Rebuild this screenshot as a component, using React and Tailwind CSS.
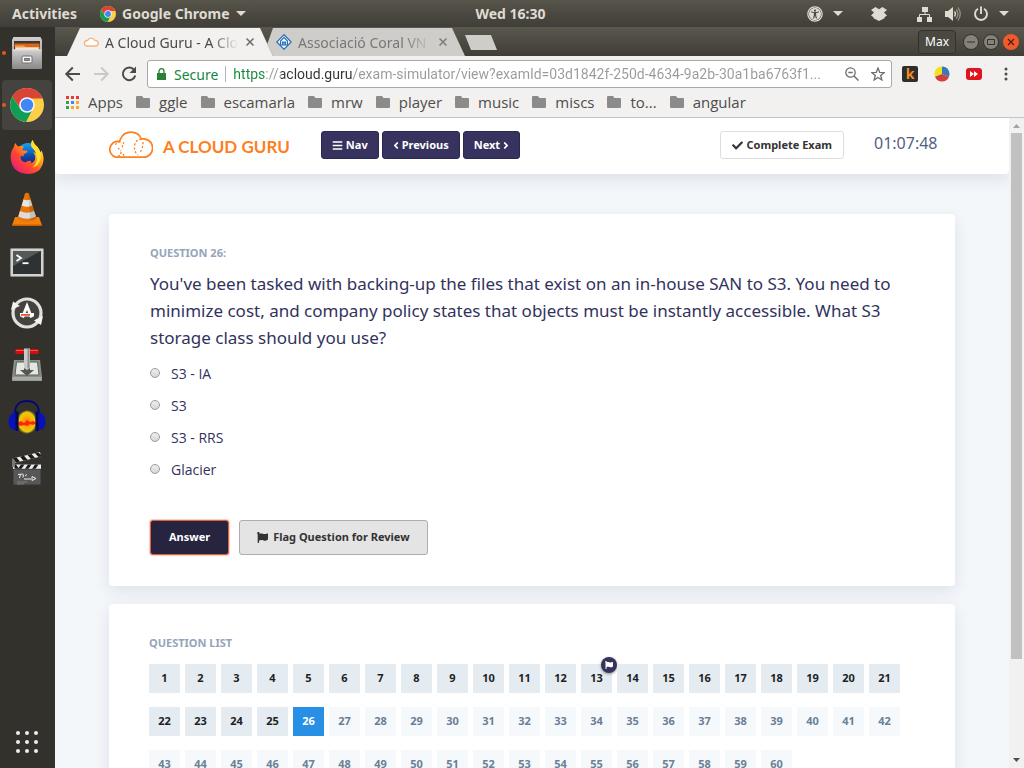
import React from "react";
import {
  FaAngleLeft,
  FaAngleRight,
  FaBars,
  FaCheck,
  FaFlag,
  FaUniversalAccess,
} from "react-icons/fa";

const ChromeIcon = ({ className }) => (
  <svg viewBox="0 0 34 34" className={className} aria-hidden="true">
    <circle cx="17" cy="17" r="17" fill="#fbcf47" />
    <path d="M2.3 8.5A17 17 0 0 1 31.7 8.5L32.6 10.4H17L10.4 20.8Z" fill="#da4437" />
    <path d="M2.3 8.5A17 17 0 0 0 16 33.97L23 20.6H17L10 20.5Z" fill="#109d58" />
    <circle cx="17" cy="17" r="7.8" fill="#f3f6fb" />
    <circle cx="17" cy="17" r="6.2" fill="#4285f4" />
  </svg>
);

const FilesIcon = () => (
  <svg viewBox="0 0 34 34" className="size-[34px]" aria-hidden="true">
    <defs>
      <linearGradient id="cabinet" x1="0" y1="0" x2="0" y2="1">
        <stop offset="0" stopColor="#d0d0d0" />
        <stop offset="1" stopColor="#8b8b8b" />
      </linearGradient>
    </defs>
    <path d="M3.500 1h27l1.500 3v28q0 1-1 1H3q-1 0-1-1V4z" fill="url(#cabinet)" />
    <path d="M4 5h26v12H4z" fill="#45352b" />
    <path d="M4.500 7.500h25V11h-25z" fill="#d9661f" />
    <path d="M5 9.500h9l1.500 1.500h14V14H5z" fill="#f2a24a" />
    <path d="M5.500 11.500h23V14h-23z" fill="#f6e6cf" />
    <path d="M2.500 13.500h29V32h-29z" fill="url(#cabinet)" />
    <path d="M2.500 13.500h29v1h-29z" fill="#e2e2e2" />
    <rect x="12" y="20" width="10" height="7" rx="1" fill="#f5f5f5" stroke="#6e6e6e" />
    <path d="M14.500 22.500h5v2h-5z" fill="#9a9a9a" stroke="#555" strokeWidth=".8" />
  </svg>
);

const FirefoxIcon = () => (
  <svg viewBox="0 0 34 34" className="size-[34px]" aria-hidden="true">
    <defs>
      <linearGradient id="fox" x1="1" y1="0" x2="0.100" y2="1">
        <stop offset="0" stopColor="#fff44f" />
        <stop offset="0.350" stopColor="#ffb01f" />
        <stop offset="0.620" stopColor="#ff4a2c" />
        <stop offset="1" stopColor="#e3128c" />
      </linearGradient>
      <linearGradient id="globe" x1="0.500" y1="0" x2="0.500" y2="1">
        <stop offset="0" stopColor="#1aa5f0" />
        <stop offset="0.550" stopColor="#0b49a8" />
        <stop offset="1" stopColor="#25146b" />
      </linearGradient>
    </defs>
    <circle cx="18" cy="15" r="12" fill="url(#globe)" />
    <path
      d="M22.500 0q1 3.500 5 7 1 .5 1 2.500 1.500 1 1.700 3l1.500-2q2.300 6 1.800 10Q31.500 34 17.500 34 2.500 33 .7 19 .2 11 4 7q0-2.500 1.500-4 .8 2.500 2.600 3.500 3-1.300 5.900.2-2 1.500-1.600 3.500l4.800.5q1 1.300-2.600 3-1.300.8-1 2.500l-2.800-.2q-.8 3.500 2.200 5.500 2.600 1.500 5-.5 3-.8 3.300 1 .2 1-2.300 1.500 4.500 0 6-4 1-4-2-7.500l3.200 1.200Q25 10 22 7.500 20 4 22.500 0z"
      fill="url(#fox)"
    />
    <path d="M22.500 0q1 3.500 5 7 5 6 3 12.500-2 6.500-8 8 6-5 4-12Q26 11 22 7.500 20 4 22.500 0z" fill="#ffdf2f" />
  </svg>
);

const VlcIcon = () => (
  <svg viewBox="0 0 34 36" className="h-9 w-[34px]" aria-hidden="true">
    <path d="M5 26h24l3 8.500H2z" fill="#f57f0b" />
    <path d="M2.500 33.500h29V35h-29z" fill="#c95f00" />
    <path d="M15 2.500q2-1.500 4 0l7.500 25.500q-9.500 5.500-19 0z" fill="#e97408" />
    <path d="M13.500 8.500q3.500 1.500 7 0l1.800 6q-5.300 2.500-10.600 0z" fill="#e6e6e6" />
    <path d="M10 20q7 3.500 14 0l2 5.500q-9 4.500-17.700 0z" fill="#dcdcdc" />
    <path d="M18 2q1 0 1.500 1l7 24.500q-3 2-6 2z" fill="#000" opacity=".12" />
  </svg>
);

const TerminalIcon = () => (
  <svg viewBox="0 0 34 30" className="mt-1 h-[30px] w-[34px]" aria-hidden="true">
    <rect x=".5" y=".5" width="33" height="28" rx="1" fill="#d2d2d2" stroke="#8c8c8c" />
    <path d="M3 3h28v23H3z" fill="#2f3232" />
    <path d="M3 3h28L3 18z" fill="#555957" />
    <path d="M6.500 7l4.500 3-4.500 3" fill="none" stroke="#fff" strokeWidth="1.800" />
    <path d="M12.500 15.200h6" stroke="#fff" strokeWidth="1.800" />
  </svg>
);

const UpdaterIcon = () => (
  <svg viewBox="0 0 34 34" className="size-[34px]" aria-hidden="true">
    <circle cx="17" cy="17" r="14" fill="#454340" />
    <circle cx="17" cy="17" r="14" fill="none" stroke="#e2e0dd" strokeWidth="3.200" />
    <path d="M1 14l2-8.500 7 4.500-2.500 1z" fill="#f4f3f1" />
    <path d="M33 20l-2 9-7-4.500 2.500-1.500z" fill="#f4f3f1" />
    <path d="M12.500 21.500L17 10l4.500 11.500" fill="none" stroke="#fff" strokeWidth="3" />
    <path d="M10 17h14v3.500H10z" fill="#fff" />
    <path d="M11 18h9v1.800h-9z" fill="#e95420" />
  </svg>
);

const TransmissionIcon = () => (
  <svg viewBox="0 0 34 36" className="h-9 w-[34px]" aria-hidden="true">
    <path d="M4 13h26l2 17v4H2v-4z" fill="#8b8d89" />
    <path d="M2.500 30h29v3.500h-29z" fill="#a9aba7" />
    <path d="M6.500 15h21l1.500 13H5z" fill="#e4e6e2" stroke="#5d5f5c" />
    <path d="M14 20h6v3h4l-7 6-7-6h4z" fill="#555753" />
    <rect x="5" y="2" width="24" height="5" rx="2.500" fill="#d40c0c" />
    <path d="M6 3.500h22" stroke="#f35050" />
    <path d="M14 1.500h6V21l-3 2-3-2z" fill="#c9cbc8" />
    <path d="M17.500 2h2v18.500l-2 1z" fill="#8e908c" />
  </svg>
);

const AudacityIcon = () => (
  <svg viewBox="0 0 38 36" className="h-9 w-[38px]" aria-hidden="true">
    <defs>
      <radialGradient id="flame">
        <stop offset="0" stopColor="#ff7a00" />
        <stop offset="0.500" stopColor="#f9b208" />
        <stop offset="0.800" stopColor="#e9cb10" />
        <stop offset="1" stopColor="#a08a10" stopOpacity=".3" />
      </radialGradient>
    </defs>
    <path d="M9 17l5-4 5-2 6 2 4 4v13l-5 3-5 2-6-2-4-3z" fill="url(#flame)" />
    <path d="M9 24l4-2 3 2 3-3 3 2 3-1 4 2-4 2-3-1-3 2-3-1-4 1z" fill="#ff2600" />
    <path d="M7 14C7 6 12 2 19 2s12 4 12 12" fill="none" stroke="#040a70" strokeWidth="2" />
    <path d="M8 12.500q-8 3-7.500 11T8 31h2V12.500z" fill="#0712b9" />
    <path d="M30 12.500q8 3 7.500 11T30 31h-2V12.500z" fill="#0712b9" />
    <path d="M7.500 12.500h3V32h-3zM27.500 12.500h3V32h-3z" fill="#060a4c" />
  </svg>
);

const ClapperIcon = () => (
  <svg viewBox="0 0 32 36" className="h-9 w-8" aria-hidden="true">
    <path d="M2 18h28v16H2z" fill="#575757" stroke="#343434" />
    <path d="M2 13.500h28v4.300H2z" fill="#ededed" />
    <path d="M2 13.500h3l3 4.300H4zM10 13.500h3.500l-3 4.300H7zM17 13.500h3.500l-3 4.300H14zM24 13.500h3.500l-3 4.300H21z" fill="#1b1b1b" />
    <path d="M1.500 7.500L29 1l1 4.500L2.800 12z" fill="#ededed" />
    <path d="M1.500 7.500l4-.9 3.500 3.900-4 1zM9 5.700l4-.9 3.500 4-4 .9zM16.500 4l4-1 3.500 4-4 1zM24 2.200l3.500-.8L30 4l.3 1.500-2.800.6z" fill="#1b1b1b" />
    <path d="M1 8l3 1v7H1z" fill="#777" />
    <path d="M7 23.500l5-.5M9.500 23.500l-1 3.500M12.500 23.500l-.5 3M14 25l2-1.500M13 28h7M21 25.500v4l4-2z" stroke="#eee" strokeWidth="1" fill="none" />
    <path d="M6 31h10M6 33h7" stroke="#888" strokeWidth=".8" />
  </svg>
);

const dock = [
  { name: "Files", icon: <FilesIcon />, running: true },
  { name: "Google Chrome", icon: <ChromeIcon className="size-[34px]" />, running: true, active: true },
  { name: "Firefox", icon: <FirefoxIcon /> },
  { name: "VLC media player", icon: <VlcIcon /> },
  { name: "Terminal", icon: <TerminalIcon /> },
  { name: "Software Updater", icon: <UpdaterIcon /> },
  { name: "Transmission", icon: <TransmissionIcon /> },
  { name: "Audacity", icon: <AudacityIcon /> },
  { name: "Video editor", icon: <ClapperIcon /> },
];

const Caret = () => (
  <svg viewBox="0 0 10 5" className="h-[5px] w-[10px]" aria-hidden="true">
    <path d="M0 0h10L5 5z" fill="currentColor" />
  </svg>
);

const TopBar = () => (
  <header className="flex h-[27px] shrink-0 items-center bg-linear-to-b from-[#57544a] to-[#403e38] text-[14px] font-bold text-[#dfdbd2]">
    <div className="flex flex-1 items-center gap-[23px] pl-3">
      <button type="button">Activities</button>
      <button type="button" className="flex items-center gap-[6px]">
        <ChromeIcon className="size-4" />
        <span>Google Chrome</span>
        <Caret />
      </button>
    </div>
    <time>Wed 16:30</time>
    <div className="flex flex-1 items-center justify-end pr-[15px]">
      <button type="button" aria-label="Accessibility" className="flex items-center gap-[10px]">
        <FaUniversalAccess className="size-4" />
        <Caret />
      </button>
      <svg viewBox="0 0 16 14" className="ml-7 h-[14px] w-4" aria-hidden="true">
        <path d="M4.500 0L8 2.300 11.500 0 16 3l-3 2.500L16 8.500l-2.500 1.800v1L8 14l-5.500-2.700v-1L0 8.500l3-3L0 3z" fill="currentColor" />
      </svg>
      <button type="button" aria-label="System menu" className="ml-[30px] flex items-center gap-3">
        <svg viewBox="0 0 16 16" className="size-4" aria-hidden="true">
          <path d="M5 1h6v5H5zM0 11h5v5H0zM10 11h5v5h-5z" fill="currentColor" />
          <path d="M8 6v2.500M2.500 11V8.500h10V11" fill="none" stroke="currentColor" />
        </svg>
        <svg viewBox="0 0 16 16" className="size-4" aria-hidden="true">
          <path d="M0 5h3l5-4v14l-5-4H0z" fill="currentColor" />
          <path d="M9.500 5.500q2 2.500 0 5" fill="none" stroke="currentColor" strokeWidth="1.300" />
          <path d="M11.300 3.500q3.500 4.500 0 9M13 1.500q4.500 6.500 0 13" fill="none" stroke="currentColor" strokeWidth="1.300" opacity=".5" />
        </svg>
        <span className="flex items-center gap-[10px]">
          <svg viewBox="0 0 16 16" className="size-4" aria-hidden="true">
            <path d="M5 2.800A6 6 0 1 0 11 2.800M8 .5V8" fill="none" stroke="currentColor" strokeWidth="1.900" />
          </svg>
          <Caret />
        </span>
      </button>
    </div>
  </header>
);

const Dock = () => (
  <nav aria-label="Dock" className="flex w-[55px] shrink-0 flex-col items-start bg-[#33312c] pt-px pb-[15px] pl-[2px]">
    <ul className="flex flex-col gap-[2px]">
      {dock.map((app) => (
        <li key={app.name} className="relative">
          {app.running && <span className="absolute top-[23px] left-0 size-1 rounded-full bg-[#e95420]" />}
          <button
            type="button"
            aria-label={app.name}
            className={
              app.active
                ? "flex size-[50px] items-center justify-center rounded-[4px] bg-[#45433f]"
                : "flex size-[50px] items-center justify-center"
            }
          >
            {app.icon}
          </button>
        </li>
      ))}
    </ul>
    <button type="button" aria-label="Show applications" className="mt-auto ml-[14px] grid grid-cols-3 gap-[5px]">
      {Array.from({ length: 9 }, (_, i) => (
        <span key={i} className="size-1 rounded-full bg-[#eeeeec]" />
      ))}
    </button>
  </nav>
);

const CloseMark = () => (
  <svg viewBox="0 0 8 8" className="size-2" aria-hidden="true">
    <path d="M.5.5l7 7M7.500.5l-7 7" stroke="currentColor" strokeWidth="1.500" />
  </svg>
);

const CloudOutline = ({ className }) => (
  <svg viewBox="2 0 44 28" className={className} aria-hidden="true">
    <g fill="none" stroke="#ff7f1f" strokeWidth="1.700">
      <path d="M9 26.200h27.500A9.200 9.200 0 1 0 34.500 8 11.500 11.500 0 0 0 13.500 8Q12.800 9.200 12.700 10.600A8 8 0 0 0 9 26.200z" />
      <path d="M12.700 10.600Q9.500 11 8.500 14M17 11q-2 3-1.500 7M11 17l3 3M14 21q0 3-4 5M16 23l2 3" strokeDasharray="2 1.500" strokeWidth="1.300" />
      <path d="M34.500 8Q28 9 27.500 15T31 24M36 11q0 7-3 10" strokeDasharray="2 2" strokeWidth="1.300" />
    </g>
  </svg>
);

const TabCloud = () => (
  <svg viewBox="0 0 16 10" className="h-[10px] w-4 shrink-0" aria-hidden="true">
    <path d="M3.500 9h9a2.800 2.800 0 1 0-.7-5.500 4 4 0 0 0-7.300 0A2.800 2.800 0 0 0 3.500 9z" fill="#fff" stroke="#ffb27a" strokeWidth="1.400" />
  </svg>
);

const TabStrip = () => (
  <div className="flex h-[29px] shrink-0 items-end bg-linear-to-b from-[#5a574d] to-[#403e38] pl-3">
    <div role="tablist" className="flex">
      <div className="flex h-7 w-[206px] items-center bg-[#f2f1ef] pr-[19px] pl-4 [clip-path:polygon(13px_0,193px_0,100%_100%,0_100%)]">
        <button type="button" role="tab" aria-selected="true" className="flex min-w-0 flex-1 items-center gap-[6px] text-[14px] text-[#4a4a4a]">
          <TabCloud />
          <span className="min-w-0 flex-1 overflow-hidden text-left whitespace-nowrap [mask-image:linear-gradient(to_right,#000_80%,transparent)]">
            A Cloud Guru - A Clo
          </span>
        </button>
        <button type="button" aria-label="Close tab" className="ml-2 text-[#6b6b6b]">
          <CloseMark />
        </button>
      </div>
      <div className="-ml-[6px] flex h-7 w-[198px] items-center bg-[#cfcdca] pr-[18px] pl-[9px] [clip-path:polygon(6px_0,185px_0,100%_100%,6px_100%,0_60%)]">
        <button type="button" role="tab" aria-selected="false" className="flex min-w-0 flex-1 items-center gap-[6px] text-[14px] text-[#777]">
          <svg viewBox="0 0 16 16" className="size-4 shrink-0" aria-hidden="true">
            <path d="M8 .8L15.200 8 8 15.200.8 8z" fill="#fff" stroke="#2a70b8" strokeWidth="1.300" />
            <path d="M8 3.500L11.500 7v4H9.500V8h-3v3h-2V7zM8 8v4" fill="none" stroke="#2a70b8" strokeWidth="1.200" />
          </svg>
          <span className="min-w-0 flex-1 overflow-hidden text-left whitespace-nowrap [mask-image:linear-gradient(to_right,#000_80%,transparent)]">
            Associació Coral VN
          </span>
        </button>
        <button type="button" aria-label="Close tab" className="ml-2 text-[#7b7b7b]">
          <CloseMark />
        </button>
      </div>
    </div>
    <button
      type="button"
      aria-label="New tab"
      className="mb-[6px] h-[15px] w-8 bg-[#cfcdca] [clip-path:polygon(0_0,26px_0,100%_100%,6px_100%)]"
    />
    <div className="ml-auto flex h-full items-center gap-1 pr-[5px]">
      <button type="button" className="mr-[3px] h-6 rounded-[4px] border border-[#33312c] bg-[#4a4841] px-[6px] text-[12px] text-white">
        Max
      </button>
      <button type="button" aria-label="Minimize" className="flex size-4 items-center justify-center rounded-full border border-[#35332e] bg-[#84827a]">
        <svg viewBox="0 0 8 8" className="size-2" aria-hidden="true"><path d="M0 4h8" stroke="#35332e" /></svg>
      </button>
      <button type="button" aria-label="Maximize" className="flex size-4 items-center justify-center rounded-full border border-[#35332e] bg-[#84827a]">
        <svg viewBox="0 0 8 8" className="size-2" aria-hidden="true"><path d="M.5 1.500h7v5h-7z" fill="none" stroke="#35332e" /></svg>
      </button>
      <button type="button" aria-label="Close window" className="flex size-4 items-center justify-center rounded-full bg-[#f15a2c] text-[#4b1c0c]">
        <svg viewBox="0 0 8 8" className="size-2" aria-hidden="true"><path d="M1 1l6 6M7 1L1 7" stroke="currentColor" strokeWidth="1.200" /></svg>
      </button>
    </div>
  </div>
);

const AddressRow = () => (
  <div className="flex h-9 items-center pr-[10px] pl-[9px] text-[#4b4b4b]">
    <div className="flex items-center gap-[10px]">
      <button type="button" aria-label="Back">
        <svg viewBox="0 0 18 18" className="size-[18px]" aria-hidden="true"><path d="M16 9H2.500M8.800 2.500L2.300 9l6.500 6.500" fill="none" stroke="currentColor" strokeWidth="2" /></svg>
      </button>
      <button type="button" aria-label="Forward" className="text-[#c9c8c6]">
        <svg viewBox="0 0 18 18" className="size-[18px]" aria-hidden="true"><path d="M2 9h13.500M9.200 2.500L15.700 9l-6.500 6.500" fill="none" stroke="currentColor" strokeWidth="2" /></svg>
      </button>
      <button type="button" aria-label="Reload">
        <svg viewBox="0 0 18 18" className="size-[18px]" aria-hidden="true">
          <path d="M14.200 5A6.300 6.300 0 1 0 15.300 10.500" fill="none" stroke="currentColor" strokeWidth="2" />
          <path d="M16 1.500v6.500H9.500z" fill="currentColor" />
        </svg>
      </button>
    </div>
    <div className="ml-[9px] flex h-7 min-w-0 flex-1 items-center rounded-[3px] border border-[#a9a9a9] bg-white pr-[6px] pl-[9px] text-[14px]">
      <svg viewBox="0 0 9 12" className="h-3 w-[9px] shrink-0" aria-hidden="true">
        <path d="M0 5h9v7H0z" fill="#2b7f36" />
        <path d="M2 5V3.200a2.500 2.500 0 0 1 5 0V5" fill="none" stroke="#2b7f36" strokeWidth="1.300" />
      </svg>
      <span className="ml-2 text-[#16873d]">Secure</span>
      <span className="mx-[7px] h-4 w-px bg-[#b5b5b5]" />
      <input
        aria-label="Address"
        type="text"
        className="min-w-0 flex-1 overflow-hidden bg-linear-[to_right,#16873d_33px,#9a9a9a_33px,#9a9a9a_48px,#333_48px,#333_120px,#9a9a9a_120px] bg-clip-text [font-family:Roboto,sans-serif] text-[14px] text-transparent outline-none"
        defaultValue="https://acloud.guru/exam-simulator/view?examId=03d1842f-250d-4634-9a2b-30a1ba6763f1..."
      />
      <button type="button" aria-label="Zoom" className="ml-2 text-[#6f6f6f]">
        <svg viewBox="0 0 14 14" className="size-[14px]" aria-hidden="true">
          <circle cx="5.500" cy="5.500" r="4.700" fill="none" stroke="currentColor" strokeWidth="1.300" />
          <path d="M9 9l4.500 4.500M3.300 5.500h4.400" stroke="currentColor" strokeWidth="1.500" />
        </svg>
      </button>
      <button type="button" aria-label="Bookmark this page" className="ml-3 text-[#6f6f6f]">
        <svg viewBox="0 0 14 14" className="size-[14px]" aria-hidden="true">
          <path d="M7 1l1.700 4.300 4.500.3-3.500 2.900 1.200 4.500L7 10.500 3.100 13l1.200-4.500L.8 5.600l4.500-.3z" fill="none" stroke="currentColor" strokeWidth="1.300" />
        </svg>
      </button>
    </div>
    <div className="ml-[10px] flex items-center gap-4">
      <button type="button" className="flex size-4 items-center justify-center rounded-[2px] bg-[#2e2e2e] text-[14px] leading-4 font-bold text-[#f98b1e]">
        k
      </button>
      <button type="button" aria-label="Chart extension">
        <svg viewBox="0 0 16 16" className="size-4" aria-hidden="true">
          <path d="M8 8V.5A7.500 7.500 0 0 0 1 10.700z" fill="#f2e11b" />
          <path d="M8 8V.5a7.500 7.500 0 0 1 7 10.200z" fill="#3a79b7" />
          <path d="M8 8l7 2.700a7.500 7.500 0 0 1-14 0z" fill="#cf3f3f" />
        </svg>
      </button>
      <button type="button" aria-label="Video extension">
        <svg viewBox="0 0 16 12" className="h-3 w-4" aria-hidden="true">
          <rect width="16" height="12" rx="3" fill="#e0141e" />
          <path d="M4 3l4 3-4 3zM8 3l4 3-4 3z" fill="#fff" />
        </svg>
      </button>
      <button type="button" aria-label="Browser menu" className="flex w-4 justify-center">
        <svg viewBox="0 0 4 14" className="h-[14px] w-1" aria-hidden="true">
          <g fill="#4b4b4b"><circle cx="2" cy="2" r="1.500" /><circle cx="2" cy="7" r="1.500" /><circle cx="2" cy="12" r="1.500" /></g>
        </svg>
      </button>
    </div>
  </div>
);

const folders = ["ggle", "escamarla", "mrw", "player", "music", "miscs", "to...", "angular"];
const appColors = ["#ea3939", "#ea3939", "#ea3939", "#34a053", "#4285f4", "#f6a92c", "#34a053", "#f6a92c", "#f6a92c"];

const Bookmarks = () => (
  <nav aria-label="Bookmarks" className="flex h-[26px] items-center gap-[13px] border-b border-[#c5c4c2] pb-[5px] pl-[11px] [font-family:'Open_Sans',sans-serif] text-[15px] leading-5 text-[#4d4d4d]">
    <a href="#apps" className="flex items-center gap-[9px]">
      <svg viewBox="0 0 13 13" className="size-[13px]" aria-hidden="true">
        {appColors.map((color, i) => (
          <rect key={i} x={(i % 3) * 5} y={Math.floor(i / 3) * 5} width="3" height="3" fill={color} />
        ))}
      </svg>
      Apps
    </a>
    {folders.map((name) => (
      <a key={name} href="#folder" className="flex items-center gap-[9px]">
        <svg viewBox="0 0 14 12" className="h-3 w-[14px]" aria-hidden="true">
          <path d="M1 0h5l1.500 2H13q1 0 1 1v8q0 1-1 1H1q-1 0-1-1V1q0-1 1-1z" fill="#8b8b8b" />
        </svg>
        {name}
      </a>
    ))}
  </nav>
);

const navButton =
  "flex h-7 items-center gap-[3px] rounded-[3px] border border-[#2a2750] bg-[#36335e] px-[10px] text-[11px] font-bold text-white";

const SiteHeader = () => (
  <header className="relative flex h-14 shrink-0 items-start rounded-b-[4px] bg-white px-[54px] pt-[13px] shadow-[0_5px_15px_rgba(50,50,93,0.11)]">
    <a href="#home" className="flex items-center gap-[10px] text-[17px] font-bold text-[#ff7f1f] [font-family:Lato,sans-serif]">
      <CloudOutline className="h-7 w-11" />
      <span className="pt-1 leading-6 whitespace-nowrap">A CLOUD GURU</span>
    </a>
    <nav aria-label="Exam" className="ml-[31px] flex gap-[3px]">
      <button type="button" className={navButton}>
        <FaBars className="size-[11px]" />
        Nav
      </button>
      <button type="button" className={navButton}>
        <FaAngleLeft className="h-[11px] w-[6px]" />
        Previous
      </button>
      <button type="button" className={navButton}>
        Next
        <FaAngleRight className="h-[11px] w-[6px]" />
      </button>
    </nav>
    <button type="button" className="ml-auto flex h-7 items-center gap-1 rounded-[3px] border border-[#dedede] bg-white px-[11px] text-[11px] font-bold text-[#333]">
      <FaCheck className="size-[11px]" />
      Complete Exam
    </button>
    <time className="ml-[30px] w-[81px] text-[16px] leading-6 text-[#525f7f]">01:07:48</time>
  </header>
);

const answers = ["S3 - IA", "S3", "S3 - RRS", "Glacier"];

const QuestionCard = () => (
  <section className="rounded-[4px] bg-white px-[41px] pt-[31px] pb-[31px] shadow-[0_5px_15px_rgba(50,50,93,0.1)]">
    <h2 className="text-[11px] leading-4 font-bold text-[#94a5ba]">QUESTION 26:</h2>
    <p className="mt-[9px] text-[17px] leading-[27px] text-[#32325d]">
      You've been tasked with backing-up the files that exist on an in-house SAN to S3. You need to minimize cost, and
      company policy states that objects must be instantly accessible. What S3 storage class should you use?
    </p>
    <fieldset aria-label="Answers" className="mt-[6px]">
      {answers.map((answer) => (
        <label key={answer} className="flex h-8 items-center gap-[11px] [font-family:'Open_Sans',sans-serif] text-[14px] text-[#32325d]">
          <input
            type="radio"
            name="answer"
            className="size-[10px] appearance-none rounded-full border border-[#9c9c9c] bg-linear-to-b from-[#eee] to-[#d6d6d6] checked:bg-[#555]"
          />
          {answer}
        </label>
      ))}
    </fieldset>
    <div className="mt-[35px] flex gap-[10px]">
      <button type="button" className="h-[35px] rounded-[3px] border border-[#d9633e] bg-[#26243f] px-[18px] text-[11px] font-bold text-white shadow-[0_0_1px_1px_rgba(233,84,32,0.3)]">
        Answer
      </button>
      <button type="button" className="flex h-[35px] items-center gap-[5px] rounded-[3px] border border-[#adadad] bg-[#e4e4e4] px-[17px] text-[11px] font-bold text-[#333]">
        <FaFlag className="size-[11px]" />
        Flag Question for Review
      </button>
    </div>
  </section>
);

const CURRENT = 26;
const FLAGGED = 13;
const cellStyle = (n) => {
  if (n === CURRENT) return "h-[29px] w-[31px] bg-[#2790e5] text-white";
  if (n < CURRENT) return "h-[29px] w-[31px] bg-[#e4ecf2] text-[#1f1f1f]";
  return "h-[29px] w-[31px] bg-[#f5f9fc] text-[#6b7f96]";
};

const QuestionList = () => (
  <section className="mt-[18px] rounded-[4px] bg-white px-10 pt-[31px] pb-10 shadow-[0_5px_15px_rgba(50,50,93,0.1)]">
    <h2 className="text-[11px] leading-4 font-bold text-[#94a5ba]">QUESTION LIST</h2>
    <ol className="mt-[13px] flex flex-wrap gap-x-[5px] gap-y-[14px] text-[11px] font-bold">
      {Array.from({ length: 60 }, (_, i) => i + 1).map((n) => (
        <li key={n} className="relative">
          <button type="button" aria-current={n === CURRENT ? "step" : undefined} className={cellStyle(n)}>
            {n}
          </button>
          {n === FLAGGED && (
            <span className="absolute -top-[7px] left-5 flex size-4 items-center justify-center rounded-full bg-[#36335e] text-white shadow-[0_1px_3px_rgba(0,0,0,0.4)]">
              <FaFlag className="size-2" />
            </span>
          )}
        </li>
      ))}
    </ol>
  </section>
);

const Scrollbar = () => (
  <div aria-hidden="true" className="flex w-[15px] shrink-0 flex-col items-center bg-[#f1f1f1] text-[#505050]">
    <svg viewBox="0 0 15 15" className="size-[15px] shrink-0"><path d="M4 10h7L7.500 6z" fill="#a3a3a3" /></svg>
    <div className="h-[526px] w-[11px] bg-[#c1c1c1]" />
    <svg viewBox="0 0 15 15" className="mt-auto size-[15px] shrink-0"><path d="M4 5h7L7.500 9z" fill="currentColor" /></svg>
  </div>
);

export default function App() {
  return (
    <div className="flex h-screen flex-col overflow-hidden bg-[#33312c] [font-family:'Noto_Sans',sans-serif]">
      <TopBar />
      <div className="flex min-h-0 flex-1">
        <Dock />
        <div className="flex min-w-0 flex-1 flex-col">
          <TabStrip />
          <div className="shrink-0 bg-[#f2f1ef]">
            <AddressRow />
            <Bookmarks />
          </div>
          <div className="flex min-h-0 flex-1">
            <div className="flex min-w-0 flex-1 flex-col overflow-hidden bg-[#f3f7fa]">
              <SiteHeader />
              <main className="min-h-0 flex-1 overflow-hidden px-[54px] pt-10">
                <QuestionCard />
                <QuestionList />
              </main>
            </div>
            <Scrollbar />
          </div>
        </div>
      </div>
    </div>
  );
}
